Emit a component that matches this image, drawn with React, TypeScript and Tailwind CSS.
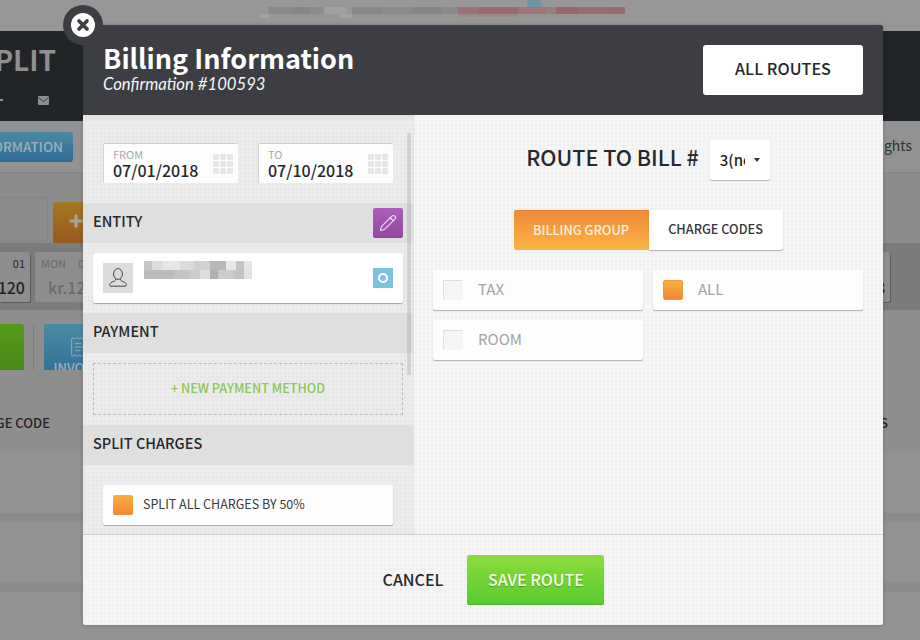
import React from "react";
import { Pencil, Plus, ReceiptText } from "lucide-react";

const FONT = "font-['Noto_Sans_CJK_SC','Source_Sans_Pro','Open_Sans',sans-serif]";
const PAPER =
  "bg-[radial-gradient(rgba(0,0,0,0.025)_1px,transparent_1px)] bg-[length:4px_4px]";

// pixelated blocks where the source picture was censored
const NAME_CELLS: [number, number, number, string][] = [
  [0, 0, 8, "#c6c6c6"], [8, 0, 10, "#dcdcdc"], [18, 0, 18, "#e6e6e6"], [36, 0, 14, "#dadada"],
  [50, 0, 16, "#d0d0d0"], [66, 0, 16, "#b8b8b8"], [82, 0, 10, "#e8e8e8"], [92, 0, 8, "#c4c4c4"],
  [100, 0, 8, "#e6e6e6"], [0, 9, 30, "#bcbcbc"], [30, 9, 16, "#c4c4c4"], [46, 9, 10, "#cccccc"],
  [56, 9, 10, "#dddddd"], [66, 9, 8, "#b0b0b0"], [74, 9, 16, "#cbcbcb"], [90, 9, 10, "#c2c2c2"],
  [100, 9, 8, "#e2e2e2"],
];

const TOP_CELLS: [number, number, number, number, string][] = [
  [268, 7, 24, 7, "#8a8a8a"], [292, 7, 18, 7, "#868686"], [310, 7, 14, 7, "#8c8c8c"], [324, 7, 22, 7, "#a0a0a0"],
  [352, 7, 30, 7, "#888888"], [382, 7, 30, 7, "#8c8c8c"], [412, 7, 30, 7, "#868686"], [442, 7, 16, 7, "#8b8b8b"],
  [458, 7, 20, 7, "#9c7074"], [478, 7, 40, 7, "#9a6a6e"], [518, 7, 28, 7, "#a07478"], [546, 7, 10, 7, "#957f80"],
  [556, 7, 22, 7, "#9a6468"], [578, 7, 30, 7, "#9c6c70"], [608, 7, 17, 7, "#9a6a6e"],
  [527, 0, 14, 7, "#6f96a4"], [260, 14, 10, 4, "#a2a2a2"], [340, 14, 12, 4, "#a4a4a4"],
  [458, 14, 60, 3, "#9d8a8b"],
];

function CalendarGlyph() {
  return (
    <div className="grid grid-cols-3 gap-[1px]">
      {Array.from({ length: 9 }).map((_, i) => (
        <div key={i} className="h-[6px] w-[6px] rounded-[1px] bg-[#e6e6e6]" />
      ))}
    </div>
  );
}

function DateField({ label, value }: { label: string; value: string }) {
  return (
    <div className="flex h-10 w-[135px] items-center justify-between rounded-[2px] border-l border-t border-l-[#d4d4d4] border-t-[#cfcfcf] bg-[#fdfdfd] pl-[9px] pr-[5px]">
      <div className="flex flex-col">
        <span className="text-[11px] leading-[12px] text-[#aaaaaa]">{label}</span>
        <span className="text-[16px] font-medium leading-[20px] text-[#26282b]">{value}</span>
      </div>
      <CalendarGlyph />
    </div>
  );
}

function SectionHead({ title, children }: { title: string; children?: React.ReactNode }) {
  return (
    <div className="flex h-10 items-center justify-between bg-[#dfdfdf] pl-[10px] pr-[10px]">
      <span className="pb-[5px] text-[14.500px] font-medium text-[#26282b]">{title}</span>
      {children}
    </div>
  );
}

function CheckRow({ label, checked }: { label: string; checked?: boolean }) {
  return (
    <div className="flex h-10 items-center rounded-[2px] bg-[#fdfdfd] pl-[10px] shadow-[0_1px_1px_rgba(0,0,0,0.28)]">
      {checked ? (
        <div className="h-5 w-5 rounded-[2px] border border-[#ef9a3e] bg-gradient-to-b from-[#f8ae40] to-[#f48735]" />
      ) : (
        <div className="h-5 w-5 rounded-[2px] border-l border-t border-[#dcdcdc] bg-[#f5f5f5]" />
      )}
      <span className="ml-[15px] pb-[2px] text-[15px] text-[#a3a3a3]">{label}</span>
    </div>
  );
}

function Backdrop() {
  return (
    <div className="flex h-[640px] w-[920px] flex-col overflow-hidden bg-[#929292] text-[#222427]">
      <div className="h-[31px] shrink-0 bg-[#979797]">
        <svg width="920" height="31">
          {TOP_CELLS.map(([x, y, w, h, c]) => (
            <rect key={`${x}-${y}`} x={x} y={y} width={w} height={h} fill={c} />
          ))}
        </svg>
      </div>

      <div className="flex h-[90px] shrink-0 flex-col bg-[#222527]">
        <div className="mt-[10px] flex h-9 w-[56px] justify-end overflow-hidden">
          <span className="whitespace-nowrap text-[28px] font-bold leading-9 text-[#8f8f8f]">SPLIT</span>
        </div>
        <div className="mt-[18px] flex h-[10px] items-center justify-between pl-0">
          <div className="h-[2px] w-[3px] bg-[#8f8f8f]" />
          <svg width="11" height="9" viewBox="0 0 11 9" className="ml-[35px] mr-auto">
            <rect width="11" height="9" rx="1" fill="#8f8f8f" />
            <path d="M0.500 1.500L5.500 5.500L10.500 1.500" fill="none" stroke="#222527" strokeWidth="0.8" />
          </svg>
        </div>
      </div>

      <div className="flex h-[52px] shrink-0 items-center justify-between border-b border-[#858585] bg-[#929292]">
        <div className="flex h-[30px] w-[73px] items-center justify-end overflow-hidden rounded-r-[3px] bg-gradient-to-b from-[#4b8aa0] to-[#2f6b96] pr-[10px]">
          <span className="whitespace-nowrap pb-[1px] text-[13.500px] font-medium text-[#a2b0b6]">INFORMATION</span>
        </div>
        <span className="pb-[3px] pr-[8px] text-[14px] text-[#2e2f31]">nights</span>
      </div>

      <div className="flex h-[70px] shrink-0 items-end bg-[#8c8c8c]">
        <div className="mb-[1px] h-[45px] w-[48px] rounded-r-[2px] border-y border-r border-[#848484] bg-[#8c8c8c]" />
        <div className="ml-[5px] flex h-[41px] w-[40px] items-start rounded-t-[3px] bg-gradient-to-b from-[#a3771f] to-[#99591f] pl-[14px] pt-[10px]">
          <Plus size={18} strokeWidth={4} stroke="#a9a39a" />
        </div>
      </div>

      <div className="flex h-[67px] shrink-0 items-start justify-between bg-[#7b7b7b] pr-[30px] pt-[9px]">
        <div className="flex gap-[5px]">
          <div className="flex h-[50px] w-[30px] flex-col items-end rounded-r-[2px] bg-[#8e8e8e] pr-[5px] shadow-[1px_1px_0_rgba(0,0,0,0.25)]">
            <span className="mt-[3px] text-[11px] leading-4">01</span>
            <span className="mt-[4px] text-[16px] font-medium leading-6">120</span>
          </div>
          <div className="flex h-[50px] w-[60px] flex-col rounded-l-[2px] bg-[#8e8e8e] pl-[6px]">
            <span className="mt-[3px] whitespace-nowrap text-[11px] leading-4 text-[#6a6a6a]">MON&nbsp;&nbsp;&nbsp;&nbsp;&nbsp;01</span>
            <span className="ml-[7px] mt-[4px] whitespace-nowrap text-[16px] font-medium leading-6 text-[#6a6a6a]">kr.120</span>
          </div>
        </div>
        <div className="flex h-[50px] w-[30px] flex-col items-end rounded-[2px] bg-[#8e8e8e] pr-[5px] shadow-[1px_1px_0_rgba(0,0,0,0.25)]">
          <span className="mt-[23px] text-[16px] font-medium leading-6">8</span>
        </div>
      </div>

      <div className="flex h-[60px] shrink-0 items-start bg-[#8e8e8e] pt-[14px]">
        <div className="h-[60px] w-6 shrink-0 rounded-r-[3px] bg-gradient-to-b from-[#529a17] to-[#47861a]" />
        <div className="ml-[9px] h-[60px] w-px shrink-0 bg-[#7e7e7e]" />
        <div className="ml-[10px] flex h-[60px] w-[70px] shrink-0 flex-col items-center rounded-l-[3px] bg-gradient-to-b from-[#4b8aa0] to-[#2f6b96] pt-[12px]">
          <ReceiptText size={22} strokeWidth={1} stroke="#a2b0b6" />
          <span className="text-[13px] font-medium leading-5 text-[#a2b0b6]">INVOICE</span>
        </div>
      </div>

      <div className="h-[41px] shrink-0 bg-[#8e8e8e]" />
      <div className="flex h-[40px] shrink-0 items-start justify-between bg-[#8e8e8e] pr-[32px] pt-[2px]">
        <div className="flex w-[50px] justify-end overflow-hidden">
          <span className="whitespace-nowrap text-[13px] font-medium">CHARGE CODE</span>
        </div>
        <span className="text-[13px] font-medium">S</span>
      </div>
      <div className="h-[62px] shrink-0 bg-[#929292]" />
      <div className="h-[9px] shrink-0 bg-[#8c8c8c]" />
      <div className="h-[60px] shrink-0 bg-[#929292]" />
      <div className="h-[10px] shrink-0 bg-[#8c8c8c]" />
    </div>
  );
}

export default function App() {
  return (
    <div className={`relative h-[640px] w-[920px] overflow-hidden ${FONT}`}>
      <Backdrop />

      {/* modal */}
      <div className="absolute left-[83px] top-[25px] flex h-[600px] w-[800px] flex-col rounded-[2px] bg-[#f5f5f5] shadow-[0_0_4px_rgba(0,0,0,0.2)]">
        <button className="absolute -left-5 -top-5 z-10 flex h-10 w-10 items-center justify-center rounded-full bg-[#3c3e43]">
          <svg width="24" height="24" viewBox="0 0 24 24">
            <circle cx="12" cy="12" r="12" fill="#fff" />
            <path d="M8 8l8 8M16 8l-8 8" stroke="#3c3e43" strokeWidth="3.6" strokeLinecap="round" />
          </svg>
        </button>

        <div className="flex h-[90px] shrink-0 items-center justify-between rounded-t-[2px] bg-[#3c3e43] pl-5 pr-5">
          <div className="flex flex-col pb-[5px] text-white">
            <span className="text-[27px] font-bold leading-[32px]">Billing Information</span>
            <span className="font-['Lato',sans-serif] text-[16.700px] italic leading-[20px] text-[#f6f6f6]">Confirmation #100593</span>
          </div>
          <button className="h-[50px] w-40 rounded-[3px] bg-white pb-[4px] text-[16.200px] font-medium text-[#26282b]">ALL ROUTES</button>
        </div>

        <div className="flex min-h-0 flex-1">
          {/* left column */}
          <div className={`relative h-[419px] w-[331px] shrink-0 overflow-hidden border-r border-[#e2e2e2] bg-[#ececec] ${PAPER}`}>
            <div className="h-[7px] bg-gradient-to-b from-[#e0e0e0] to-[#ececec]" />
            <div className="absolute right-[2px] top-[18px] h-[242px] w-[4px] bg-[rgba(0,0,0,0.1)]" />

            <div className="flex justify-between px-5 pt-[21px]">
              <DateField label="FROM" value="07/01/2018" />
              <DateField label="TO" value="07/10/2018" />
            </div>

            <div className="mt-5">
              <SectionHead title="ENTITY">
                <button className="flex h-[30px] w-[30px] items-center justify-center rounded-[2px] bg-gradient-to-b from-[#ab5fb8] to-[#93479f]">
                  <Pencil size={18} strokeWidth={1.5} stroke="#efe3f1" />
                </button>
              </SectionHead>
            </div>

            <div className="mx-[10px] mt-[10px] flex h-[50px] items-start justify-between rounded-[2px] bg-white px-[10px] pt-[10px] shadow-[0_1px_1px_rgba(0,0,0,0.3)]">
              <div className="flex items-start">
                <div className="flex h-[30px] w-[30px] items-center justify-center bg-[#dcdcdc]">
                  <svg width="22" height="22" viewBox="0 0 22 22" fill="none" stroke="#34363a" strokeWidth="0.9">
                    <ellipse cx="11" cy="7" rx="4.4" ry="5.4" />
                    <path d="M8.6 12c0 1.2-.6 1.8-2 2.4-2.2.8-3.6 1.6-3.9 3.4-.1.9.3 1.4 1 1.4h14.600c.7 0 1.100-.5 1-1.400-.3-1.800-1.700-2.600-3.900-3.400-1.400-.6-2-1.200-2-2.400" />
                  </svg>
                </div>
                <svg width="118" height="20" className="ml-[9px] -mt-[2px]">
                  {NAME_CELLS.map(([x, y, w, c]) => (
                    <rect key={`${x}-${y}`} x={x + 2} y={y} width={w} height="9" fill={c} />
                  ))}
                </svg>
              </div>
              <div className="mt-[5px] flex h-5 w-5 items-center justify-center bg-[#7fc1e0]">
                <div className="h-[10px] w-[10px] rounded-full border-[2.500px] border-white" />
              </div>
            </div>

            <div className="mt-[10px]">
              <SectionHead title="PAYMENT" />
            </div>

            <div className="mx-[10px] mt-[10px] flex h-[52px] items-center justify-center border border-dashed border-[#bdbdbd]">
              <span className="pb-[1px] text-[12.600px] font-medium text-[#8cc654]">+ NEW PAYMENT METHOD</span>
            </div>

            <div className="mt-[10px]">
              <SectionHead title="SPLIT CHARGES" />
            </div>

            <div className="mx-5 mt-5 flex h-10 items-center rounded-[2px] bg-[#fdfdfd] pl-[10px] shadow-[0_1px_1px_rgba(0,0,0,0.28)]">
              <div className="h-5 w-5 rounded-[2px] bg-gradient-to-b from-[#f8ae40] to-[#f48735]" />
              <span className="ml-[10px] pb-[1px] text-[12.500px] text-[#3a3c40]">SPLIT ALL CHARGES BY 50%</span>
            </div>
          </div>

          {/* right column */}
          <div className={`flex min-w-0 flex-1 flex-col items-center pl-[19px] pr-5 pt-[25px] ${PAPER}`}>
            <div className="flex items-center">
              <span className="pb-[5px] text-[21.500px] font-medium text-[#26282b]">ROUTE TO BILL #</span>
              <div className="ml-[11px] flex h-10 w-[60px] items-center rounded-[2px] bg-white pl-[10px] shadow-[0_1px_1px_rgba(0,0,0,0.25)]">
                <span className="w-[25px] overflow-hidden whitespace-nowrap text-[15px] font-medium text-[#222]">3(new)</span>
                <div className="ml-[9px] h-0 w-0 border-x-[3px] border-t-[4px] border-x-transparent border-t-[#333]" />
              </div>
            </div>

            <div className="mt-[30px] flex">
              <div className="flex h-10 w-[135px] items-center justify-center rounded-l-[2px] border-t border-[#e58232] bg-gradient-to-b from-[#f38a3a] to-[#f7b443] pb-[2px] text-[12.700px] font-medium text-[#fdf0dc]">
                BILLING GROUP
              </div>
              <div className="flex h-10 w-[134px] items-center justify-center rounded-r-[2px] bg-white pb-[2px] text-[12.700px] font-medium text-[#33353a] shadow-[0_1px_1px_rgba(0,0,0,0.28)]">
                CHARGE CODES
              </div>
            </div>

            <div className="mt-5 grid w-full grid-cols-2 gap-x-[10px] gap-y-[10px]">
              <CheckRow label="TAX" />
              <CheckRow label="ALL" checked />
              <CheckRow label="ROOM" />
            </div>
          </div>
        </div>

        <div className={`flex h-[91px] shrink-0 items-center justify-center rounded-b-[2px] border-t border-[#d0d0d0] pl-[21px] ${PAPER}`}>
          <span className="pb-[3px] text-[16px] font-medium text-[#26282b]">CANCEL</span>
          <button className="ml-6 h-[50px] w-[137px] rounded-[2px] border-b border-[#4ea82a] bg-gradient-to-b from-[#8edb3d] to-[#55cc2e] pb-[2px] text-[16px] font-medium text-[#f6fbe9] [text-shadow:0_1px_1px_rgba(0,0,0,0.25)]">
            SAVE ROUTE
          </button>
        </div>
      </div>
    </div>
  );
}
